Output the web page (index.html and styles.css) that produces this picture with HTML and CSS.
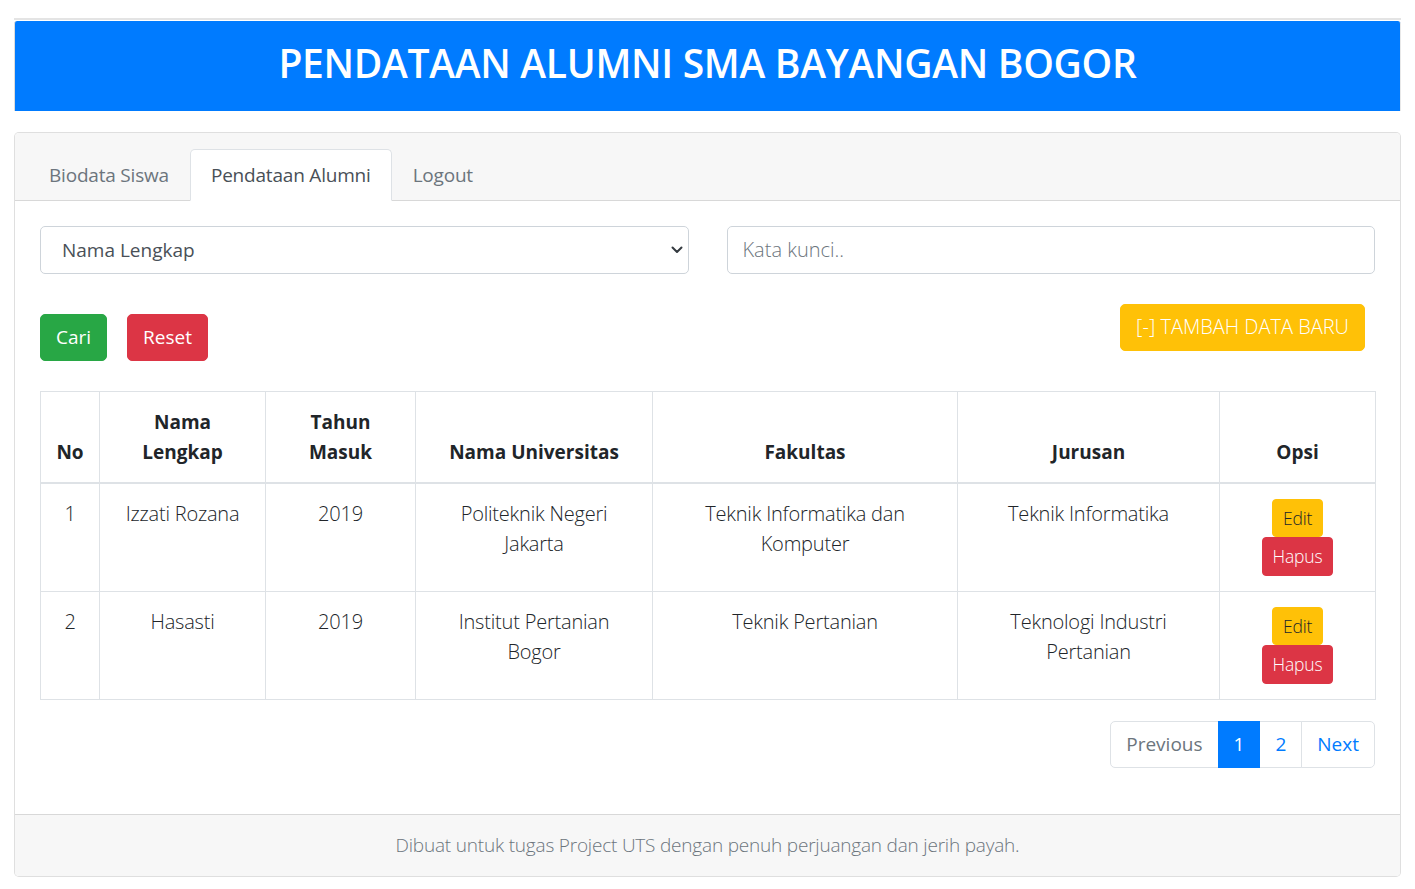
FILE: index.html
```html
<!DOCTYPE html>
<html lang="id">
<head>
<meta charset="utf-8">
<title>Pendataan Alumni</title>
<link rel="stylesheet" href="styles.css">
</head>
<body>
<div class="page">
  <div class="top-rule"></div>
  <header class="banner">
    <h1 class="banner-title">PENDATAAN ALUMNI SMA BAYANGAN BOGOR</h1>
  </header>

  <section class="card">
    <div class="card-header">
      <ul class="tabs">
        <li><a class="tab">Biodata Siswa</a></li>
        <li><a class="tab tab-active">Pendataan Alumni</a></li>
        <li><a class="tab">Logout</a></li>
      </ul>
    </div>

    <div class="card-body">
      <div class="filters">
        <div class="select-wrap">
          <select class="field field-select">
            <option>Nama Lengkap</option>
          </select>
          <svg class="chevron" width="12" height="8" viewBox="0 0 12 8"><path d="M1.5 1.5 L6 6 L10.5 1.5" fill="none" stroke="#343a40" stroke-width="2" stroke-linecap="round" stroke-linejoin="round"/></svg>
        </div>
        <input class="field field-input" type="text" placeholder="Kata kunci..">
      </div>

      <div class="toolbar">
        <div class="actions">
          <button class="btn btn-green">Cari</button>
          <button class="btn btn-red">Reset</button>
        </div>
        <button class="btn btn-yellow">[-] TAMBAH DATA BARU</button>
      </div>

      <table class="data">
        <colgroup>
          <col class="c-no"><col class="c-nama"><col class="c-tahun"><col class="c-univ"><col class="c-fak"><col class="c-jur"><col class="c-opsi">
        </colgroup>
        <thead>
          <tr>
            <th>No</th>
            <th>Nama Lengkap</th>
            <th>Tahun Masuk</th>
            <th>Nama Universitas</th>
            <th>Fakultas</th>
            <th>Jurusan</th>
            <th>Opsi</th>
          </tr>
        </thead>
        <tbody>
          <tr>
            <td>1</td>
            <td>Izzati Rozana</td>
            <td>2019</td>
            <td>Politeknik Negeri Jakarta</td>
            <td>Teknik Informatika dan Komputer</td>
            <td>Teknik Informatika</td>
            <td><div class="opsi"><button class="btn-sm btn-edit">Edit</button><button class="btn-sm btn-hapus">Hapus</button></div></td>
          </tr>
          <tr>
            <td>2</td>
            <td>Hasasti</td>
            <td>2019</td>
            <td>Institut Pertanian Bogor</td>
            <td>Teknik Pertanian</td>
            <td>Teknologi Industri Pertanian</td>
            <td><div class="opsi"><button class="btn-sm btn-edit">Edit</button><button class="btn-sm btn-hapus">Hapus</button></div></td>
          </tr>
        </tbody>
      </table>

      <nav class="pager">
        <span class="page-link page-disabled page-first">Previous</span>
        <span class="page-link page-active">1</span>
        <span class="page-link">2</span>
        <span class="page-link page-last">Next</span>
      </nav>
    </div>

    <footer class="card-footer">Dibuat untuk tugas Project UTS dengan penuh perjuangan dan jerih payah.</footer>
  </section>
</div>
</body>
</html>
```

FILE: styles.css
```css
* { box-sizing: border-box; }

html, body {
  margin: 0;
  background: #fff;
}

body {
  font-family: "Open Sans", "Noto Sans", "Liberation Sans", sans-serif;
  font-size: 19px;
  line-height: 30px;
  color: #212529;
}

.page {
  padding: 18px 14px 0 14px;
}

.top-rule {
  height: 2px;
  background: #e4e4e4;
}

.banner {
  margin-top: 1px;
  height: 90px;
  background: #007bff;
  border-left: 1px solid #dcdcdc;
  border-right: 1px solid #e8e8e8;
  border-radius: 3px 3px 0 0;
  padding-top: 18px;
  text-align: center;
}

.banner-title {
  margin: 0;
  font-size: 39px;
  line-height: 48px;
  font-weight: 600;
  letter-spacing: -0.3px;
  color: #fff;
}

.card {
  margin-top: 21px;
  border: 1px solid rgba(0, 0, 0, 0.125);
  border-radius: 5px;
  background: #fff;
  overflow: hidden;
}

.card-header {
  background: #f7f7f7;
  padding: 16px 25px 0;
  border-bottom: 1px solid rgba(0, 0, 0, 0.125);
}

.tabs {
  list-style: none;
  margin: 0 -12px -1px;
  padding: 0;
  display: flex;
}

.tab {
  display: block;
  padding: 10px 20px;
  border: 1px solid transparent;
  border-radius: 5px 5px 0 0;
  color: #6c757d;
  line-height: 30px;
  letter-spacing: -0.2px;
}

.tab-active {
  background: #fff;
  color: #495057;
  border-color: #dee2e6 #dee2e6 #fff;
}

.card-body {
  padding: 25px 25px 26px;
}

.filters {
  display: grid;
  grid-template-columns: 1fr 1fr;
  column-gap: 38px;
}

.select-wrap {
  position: relative;
}

.field {
  display: block;
  width: 100%;
  height: 47.5px;
  font-family: inherit;
  font-size: 19px;
  line-height: 30px;
  color: #495057;
  background: #fff;
  border: 1px solid #ced4da;
  border-radius: 5px;
  padding: 7.5px 15px;
  outline: none;
}

.field-select {
  appearance: none;
  -webkit-appearance: none;
  padding-left: 21px;
}

.field-input {
  font-size: 20px;
}

.field-input::placeholder {
  color: #6c757d;
  font-weight: 300;
}

.chevron {
  position: absolute;
  right: 6px;
  top: 20px;
}

.toolbar {
  margin-top: 30px;
  display: flex;
  justify-content: space-between;
  align-items: flex-start;
}

.actions {
  display: flex;
  gap: 20px;
  margin-top: 10px;
}

.btn {
  font-family: inherit;
  font-size: 19px;
  line-height: 30px;
  padding: 7.5px 15px;
  border: 1px solid transparent;
  border-radius: 5px;
  color: #fff;
  cursor: pointer;
}

.btn-green { background: #28a745; border-color: #28a745; }
.btn-red { background: #dc3545; border-color: #dc3545; }
.btn-yellow {
  background: #ffc107;
  border-color: #ffc107;
  font-size: 20px;
  font-weight: 300;
  margin-right: 10px;
}

.data {
  margin-top: 30px;
  width: 100%;
  border-collapse: collapse;
  table-layout: fixed;
  border: 1px solid #dee2e6;
}

.c-no { width: 59px; }
.c-nama { width: 166px; }
.c-tahun { width: 150px; }
.c-univ { width: 237px; }
.c-fak { width: 305px; }
.c-jur { width: 262px; }
.c-opsi { width: 156px; }

.data th,
.data td {
  border: 1px solid #dee2e6;
  padding: 15px;
  text-align: center;
  line-height: 30px;
}

.data th {
  vertical-align: bottom;
  border-bottom: 2px solid #dee2e6;
  font-weight: 700;
}

.data td {
  vertical-align: top;
  font-size: 20px;
  font-weight: 300;
  letter-spacing: -0.2px;
}

.opsi {
  display: flex;
  flex-direction: column;
  align-items: center;
}

.btn-sm {
  font-family: inherit;
  font-size: 17.5px;
  line-height: 26.5px;
  font-weight: 300;
  letter-spacing: -0.2px;
  padding: 5px 10px;
  border: 1px solid transparent;
  border-radius: 4px;
}

.btn-edit { background: #ffc107; border-color: #ffc107; color: #212529; }
.btn-hapus { background: #dc3545; border-color: #dc3545; color: #fff; }

.pager {
  margin: 21px 0 20px;
  display: flex;
  justify-content: flex-end;
}

.page-link {
  display: block;
  padding: 10px 15px;
  line-height: 25px;
  border: 1px solid #dee2e6;
  margin-left: -1px;
  color: #007bff;
  background: #fff;
}

.page-first { border-radius: 5px 0 0 5px; margin-left: 0; }
.page-last { border-radius: 0 5px 5px 0; }
.page-disabled { color: #6c757d; }
.page-active { background: #007bff; border-color: #007bff; color: #fff; position: relative; }

.card-footer {
  background: #f7f7f7;
  border-top: 1px solid rgba(0, 0, 0, 0.125);
  padding: 15px 25px 16px;
  text-align: center;
  line-height: 30px;
  font-size: 19px;
  letter-spacing: -0.2px;
  color: #6c757d;
  font-weight: 300;
}
```
